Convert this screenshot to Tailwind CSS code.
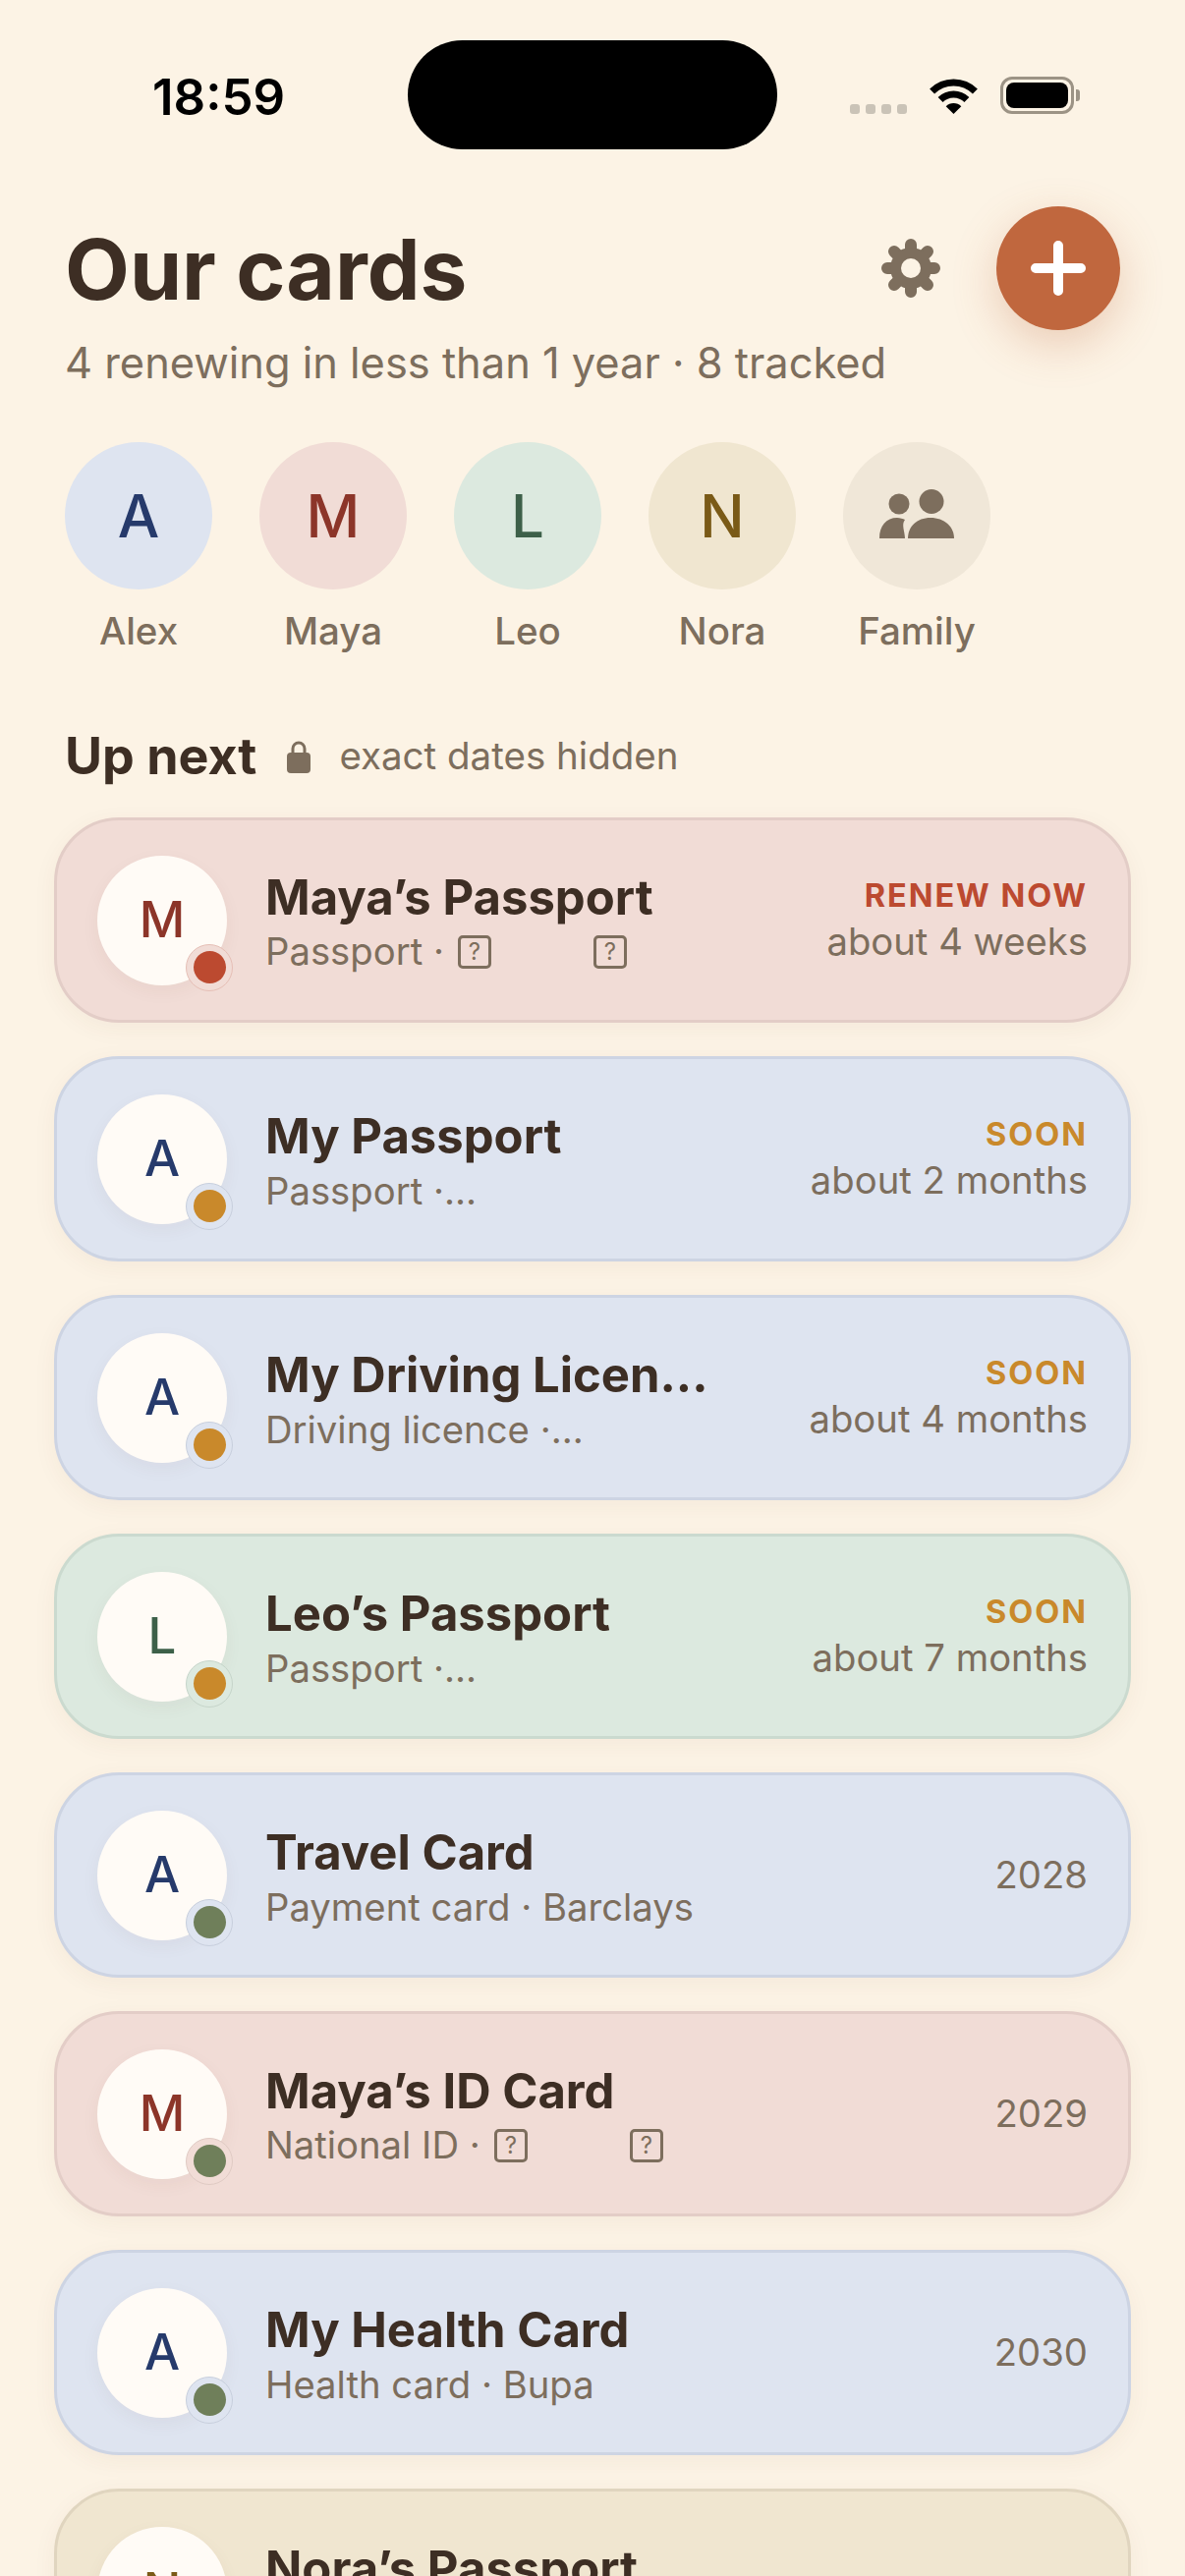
<!DOCTYPE html>
<html lang="en">
<head>
  <meta charset="UTF-8" />
  <meta name="viewport" content="width=device-width, initial-scale=1" />
  <title>Our cards</title>
  <script src="https://cdn.jsdelivr.net/npm/@tailwindcss/browser@4"></script>
</head>
<body class="bg-[#fcf3e5] font-['Inter',sans-serif] text-[#3d2e24] w-[1206px] h-[2622px] overflow-hidden">

  <!-- Status bar -->
  <div class="flex h-[152px] pt-[41px]">
    <div class="w-[415px] h-[111px] pl-[155px] pt-[21px] text-[51px] leading-[74px] font-semibold text-black">18:59</div>
    <div class="w-[376px] h-[111px] rounded-full bg-black"></div>
    <div class="flex items-end gap-[6px] ml-[74px] h-[75px] pb-0">
      <span class="w-[10px] h-[10px] rounded-[3px] bg-[#cac3b7]"></span>
      <span class="w-[10px] h-[10px] rounded-[3px] bg-[#cac3b7]"></span>
      <span class="w-[10px] h-[10px] rounded-[3px] bg-[#cac3b7]"></span>
      <span class="w-[10px] h-[10px] rounded-[3px] bg-[#cac3b7]"></span>
    </div>
    <svg class="ml-[22px] mt-[38px]" width="51" height="37" viewBox="0 0 51 37" fill="none">
      <path d="M3.6 14.1A31 31 0 0 1 47.4 14.1" stroke="#000" stroke-width="7"/>
      <path d="M12.1 22.6A19 19 0 0 1 38.9 22.6" stroke="#000" stroke-width="7"/>
      <path d="M25.5 37L17.7 29.2A11 11 0 0 1 33.3 29.2Z" fill="#000"/>
    </svg>
    <div class="flex items-center ml-[22px] mt-[37px] h-[38px]">
      <div class="w-[75px] h-[38px] rounded-[12px] border-[3px] border-[#9c9385] p-[3px]">
        <div class="w-full h-full rounded-[8px] bg-black"></div>
      </div>
      <div class="w-[4px] h-[12px] rounded-r-[3px] bg-[#9c9385] ml-[2px]"></div>
    </div>
  </div>

  <main>
    <!-- Header -->
    <div class="flex items-center pt-[58px] pl-[66px] pr-[66px]">
      <h1 class="flex-1 pt-[2px] text-[85.5px] leading-[124px] font-bold">Our cards</h1>
      <svg class="mr-[57px]" width="60" height="60" viewBox="0 0 60 60">
        <g stroke="#7d6e5d" stroke-width="12" stroke-linecap="round">
          <path d="M30 6V54M6 30H54M13 13L47 47M47 13L13 47"/>
        </g>
        <circle cx="30" cy="30" r="21" fill="#7d6e5d"/>
        <circle cx="30" cy="30" r="10" fill="#fcf3e5"/>
      </svg>
      <button class="w-[126px] h-[126px] rounded-full bg-[#c0673e] flex items-center justify-center shadow-[0_15px_45px_rgba(192,103,62,0.28)]">
        <svg width="56" height="56" viewBox="0 0 56 56"><path d="M28 5V51M5 28H51" stroke="#fff" stroke-width="10" stroke-linecap="round"/></svg>
      </button>
    </div>
    <p class="mt-[8px] pl-[66px] text-[43.4px] leading-[51px] text-[#7d6e5d]">4 renewing in less than 1 year · 8 tracked</p>

    <!-- People -->
    <div class="flex gap-[48px] mt-[55px] pl-[66px]">
      <div class="w-[150px] flex flex-col items-center">
        <div class="w-[150px] h-[150px] rounded-full bg-[#dee4f0] text-[#263a6b] flex items-center justify-center text-[60px] font-[550]">A</div>
        <span class="mt-[18px] text-[38.5px] leading-[48px] font-medium text-[#7d6e5d]">Alex</span>
      </div>
      <div class="w-[150px] flex flex-col items-center">
        <div class="w-[150px] h-[150px] rounded-full bg-[#f1dcd6] text-[#8c3529] flex items-center justify-center text-[60px] font-[550]">M</div>
        <span class="mt-[18px] text-[38.5px] leading-[48px] font-medium text-[#7d6e5d]">Maya</span>
      </div>
      <div class="w-[150px] flex flex-col items-center">
        <div class="w-[150px] h-[150px] rounded-full bg-[#dce9df] text-[#3d6049] flex items-center justify-center text-[60px] font-[550]">L</div>
        <span class="mt-[18px] text-[38.5px] leading-[48px] font-medium text-[#7d6e5d]">Leo</span>
      </div>
      <div class="w-[150px] flex flex-col items-center">
        <div class="w-[150px] h-[150px] rounded-full bg-[#f0e6d0] text-[#7a5a17] flex items-center justify-center text-[60px] font-[550]">N</div>
        <span class="mt-[18px] text-[38.5px] leading-[48px] font-medium text-[#7d6e5d]">Nora</span>
      </div>
      <div class="w-[150px] flex flex-col items-center">
        <div class="w-[150px] h-[150px] rounded-full bg-[#f0e7d8] flex items-center justify-center">
          <svg width="80" height="54" viewBox="0 0 80 54" fill="#7d6e5d">
            <circle cx="22" cy="15" r="10.5"/>
            <circle cx="55" cy="12.5" r="12.5"/>
            <path d="M2 50C2 37 9 29 20 29C23 29 26 30 28 31C24 36 28 43 28 50Z"/>
            <path d="M31 50C31 38 40 29 54 29C68 29 78 38 78 50Z"/>
          </svg>
        </div>
        <span class="mt-[18px] text-[38.5px] leading-[48px] font-medium text-[#7d6e5d]">Family</span>
      </div>
    </div>

    <!-- Up next -->
    <div class="flex items-center mt-[74px] pl-[66px] h-[60px]">
      <h2 class="text-[52px] font-bold">Up next</h2>
      <svg class="ml-[31px] mr-[29px]" width="24" height="33" viewBox="0 0 24 33" fill="#7d6e5d">
        <path d="M6 14V8a6 6 0 0 1 12 0v6" fill="none" stroke="#7d6e5d" stroke-width="3"/>
        <rect x="0" y="12" width="24" height="21" rx="4"/>
      </svg>
      <span class="text-[38.5px] text-[#7d6e5d]">exact dates hidden</span>
    </div>

    <!-- Cards -->
    <div class="flex flex-col gap-[34px] mt-[32px] ml-[55px] w-[1096px]">

      <div class="shrink-0 h-[209px] rounded-[66px] border-[3px] border-[#e3cdc7] bg-[#f1dcd6] shadow-[0_6px_24px_rgba(90,60,30,0.05)] pl-[41px] pr-[41px] flex items-center gap-[39px]">
        <div class="relative shrink-0 w-[132px] h-[132px] rounded-full bg-[#fffbf6] text-[#8c3529] flex items-center justify-center text-[51px] font-[550] shadow-[0_6px_18px_rgba(90,60,30,0.05)]">
          M
          <span class="absolute -right-[6px] -bottom-[6px] w-[48px] h-[48px] rounded-full bg-[#f1dcd6] border border-[#e6bfb6] flex items-center justify-center"><span class="w-[33px] h-[33px] rounded-full bg-[#bc4a30]"></span></span>
        </div>
        <div class="flex-1 min-w-0 pt-[5px]">
          <div class="text-[49px] leading-[60px] font-bold whitespace-nowrap">Maya’s Passport</div>
          <div class="flex items-center h-[50px] text-[38.25px] text-[#7d6e5d] whitespace-nowrap">
            Passport ·
            <span class="ml-[14px] w-[34px] h-[34px] rounded-[5px] border-[3px] border-[#7d6e5d] flex items-center justify-center text-[24px]">?</span>
            <span class="ml-[104px] w-[34px] h-[34px] rounded-[5px] border-[3px] border-[#7d6e5d] flex items-center justify-center text-[24px]">?</span>
          </div>
        </div>
        <div class="text-right whitespace-nowrap pb-[2px]">
          <div class="text-[32.5px] leading-[44px] font-bold tracking-[0.06em] text-[#bc4a30]">RENEW NOW</div>
          <div class="text-[38.25px] leading-[48px] text-[#7d6e5d]">about 4 weeks</div>
        </div>
      </div>

      <div class="shrink-0 h-[209px] rounded-[66px] border-[3px] border-[#cdd4e3] bg-[#dee4f0] shadow-[0_6px_24px_rgba(90,60,30,0.05)] pl-[41px] pr-[41px] flex items-center gap-[39px]">
        <div class="relative shrink-0 w-[132px] h-[132px] rounded-full bg-[#fffbf6] text-[#263a6b] flex items-center justify-center text-[51px] font-[550] shadow-[0_6px_18px_rgba(90,60,30,0.05)]">
          A
          <span class="absolute -right-[6px] -bottom-[6px] w-[48px] h-[48px] rounded-full bg-[#dee4f0] border border-[#c8cfdd] flex items-center justify-center"><span class="w-[33px] h-[33px] rounded-full bg-[#c9892b]"></span></span>
        </div>
        <div class="flex-1 min-w-0 pt-[5px]">
          <div class="text-[49px] leading-[60px] font-bold whitespace-nowrap">My Passport</div>
          <div class="h-[50px] leading-[50px] text-[38.25px] text-[#7d6e5d] whitespace-nowrap">Passport ·...</div>
        </div>
        <div class="text-right whitespace-nowrap pb-[2px]">
          <div class="text-[32.5px] leading-[44px] font-bold tracking-[0.06em] text-[#c9892b]">SOON</div>
          <div class="text-[38.25px] leading-[48px] text-[#7d6e5d]">about 2 months</div>
        </div>
      </div>

      <div class="shrink-0 h-[209px] rounded-[66px] border-[3px] border-[#cdd4e3] bg-[#dee4f0] shadow-[0_6px_24px_rgba(90,60,30,0.05)] pl-[41px] pr-[41px] flex items-center gap-[39px]">
        <div class="relative shrink-0 w-[132px] h-[132px] rounded-full bg-[#fffbf6] text-[#263a6b] flex items-center justify-center text-[51px] font-[550] shadow-[0_6px_18px_rgba(90,60,30,0.05)]">
          A
          <span class="absolute -right-[6px] -bottom-[6px] w-[48px] h-[48px] rounded-full bg-[#dee4f0] border border-[#c8cfdd] flex items-center justify-center"><span class="w-[33px] h-[33px] rounded-full bg-[#c9892b]"></span></span>
        </div>
        <div class="flex-1 min-w-0 pt-[5px]">
          <div class="text-[49px] leading-[60px] font-bold whitespace-nowrap">My Driving Licen...</div>
          <div class="h-[50px] leading-[50px] text-[38.25px] text-[#7d6e5d] whitespace-nowrap">Driving licence ·...</div>
        </div>
        <div class="text-right whitespace-nowrap pb-[2px]">
          <div class="text-[32.5px] leading-[44px] font-bold tracking-[0.06em] text-[#c9892b]">SOON</div>
          <div class="text-[38.25px] leading-[48px] text-[#7d6e5d]">about 4 months</div>
        </div>
      </div>

      <div class="shrink-0 h-[209px] rounded-[66px] border-[3px] border-[#cbdacf] bg-[#dce9df] shadow-[0_6px_24px_rgba(90,60,30,0.05)] pl-[41px] pr-[41px] flex items-center gap-[39px]">
        <div class="relative shrink-0 w-[132px] h-[132px] rounded-full bg-[#fffbf6] text-[#3d6049] flex items-center justify-center text-[51px] font-[550] shadow-[0_6px_18px_rgba(90,60,30,0.05)]">
          L
          <span class="absolute -right-[6px] -bottom-[6px] w-[48px] h-[48px] rounded-full bg-[#dce9df] border border-[#c6d5ca] flex items-center justify-center"><span class="w-[33px] h-[33px] rounded-full bg-[#c9892b]"></span></span>
        </div>
        <div class="flex-1 min-w-0 pt-[5px]">
          <div class="text-[49px] leading-[60px] font-bold whitespace-nowrap">Leo’s Passport</div>
          <div class="h-[50px] leading-[50px] text-[38.25px] text-[#7d6e5d] whitespace-nowrap">Passport ·...</div>
        </div>
        <div class="text-right whitespace-nowrap pb-[2px]">
          <div class="text-[32.5px] leading-[44px] font-bold tracking-[0.06em] text-[#c9892b]">SOON</div>
          <div class="text-[38.25px] leading-[48px] text-[#7d6e5d]">about 7 months</div>
        </div>
      </div>

      <div class="shrink-0 h-[209px] rounded-[66px] border-[3px] border-[#cdd4e3] bg-[#dee4f0] shadow-[0_6px_24px_rgba(90,60,30,0.05)] pl-[41px] pr-[41px] flex items-center gap-[39px]">
        <div class="relative shrink-0 w-[132px] h-[132px] rounded-full bg-[#fffbf6] text-[#263a6b] flex items-center justify-center text-[51px] font-[550] shadow-[0_6px_18px_rgba(90,60,30,0.05)]">
          A
          <span class="absolute -right-[6px] -bottom-[6px] w-[48px] h-[48px] rounded-full bg-[#dee4f0] border border-[#c8cfdd] flex items-center justify-center"><span class="w-[33px] h-[33px] rounded-full bg-[#6f7f5a]"></span></span>
        </div>
        <div class="flex-1 min-w-0 pt-[5px]">
          <div class="text-[49px] leading-[60px] font-bold whitespace-nowrap">Travel Card</div>
          <div class="h-[50px] leading-[50px] text-[38.25px] text-[#7d6e5d] whitespace-nowrap">Payment card · Barclays</div>
        </div>
        <div class="text-[38.25px] text-[#7d6e5d]">2028</div>
      </div>

      <div class="shrink-0 h-[209px] rounded-[66px] border-[3px] border-[#e3cdc7] bg-[#f1dcd6] shadow-[0_6px_24px_rgba(90,60,30,0.05)] pl-[41px] pr-[41px] flex items-center gap-[39px]">
        <div class="relative shrink-0 w-[132px] h-[132px] rounded-full bg-[#fffbf6] text-[#8c3529] flex items-center justify-center text-[51px] font-[550] shadow-[0_6px_18px_rgba(90,60,30,0.05)]">
          M
          <span class="absolute -right-[6px] -bottom-[6px] w-[48px] h-[48px] rounded-full bg-[#f1dcd6] border border-[#e0cbc4] flex items-center justify-center"><span class="w-[33px] h-[33px] rounded-full bg-[#6f7f5a]"></span></span>
        </div>
        <div class="flex-1 min-w-0 pt-[5px]">
          <div class="text-[49px] leading-[60px] font-bold whitespace-nowrap">Maya’s ID Card</div>
          <div class="flex items-center h-[50px] text-[38.25px] text-[#7d6e5d] whitespace-nowrap">
            National ID ·
            <span class="ml-[14px] w-[34px] h-[34px] rounded-[5px] border-[3px] border-[#7d6e5d] flex items-center justify-center text-[24px]">?</span>
            <span class="ml-[104px] w-[34px] h-[34px] rounded-[5px] border-[3px] border-[#7d6e5d] flex items-center justify-center text-[24px]">?</span>
          </div>
        </div>
        <div class="text-[38.25px] text-[#7d6e5d]">2029</div>
      </div>

      <div class="shrink-0 h-[209px] rounded-[66px] border-[3px] border-[#cdd4e3] bg-[#dee4f0] shadow-[0_6px_24px_rgba(90,60,30,0.05)] pl-[41px] pr-[41px] flex items-center gap-[39px]">
        <div class="relative shrink-0 w-[132px] h-[132px] rounded-full bg-[#fffbf6] text-[#263a6b] flex items-center justify-center text-[51px] font-[550] shadow-[0_6px_18px_rgba(90,60,30,0.05)]">
          A
          <span class="absolute -right-[6px] -bottom-[6px] w-[48px] h-[48px] rounded-full bg-[#dee4f0] border border-[#c8cfdd] flex items-center justify-center"><span class="w-[33px] h-[33px] rounded-full bg-[#6f7f5a]"></span></span>
        </div>
        <div class="flex-1 min-w-0 pt-[5px]">
          <div class="text-[49px] leading-[60px] font-bold whitespace-nowrap">My Health Card</div>
          <div class="h-[50px] leading-[50px] text-[38.25px] text-[#7d6e5d] whitespace-nowrap">Health card · Bupa</div>
        </div>
        <div class="text-[38.25px] text-[#7d6e5d]">2030</div>
      </div>

      <div class="shrink-0 h-[209px] rounded-[66px] border-[3px] border-[#e0d5bf] bg-[#f0e6d0] shadow-[0_6px_24px_rgba(90,60,30,0.05)] pl-[41px] pr-[41px] flex items-center gap-[39px]">
        <div class="relative shrink-0 w-[132px] h-[132px] rounded-full bg-[#fffbf6] text-[#7a5a17] flex items-center justify-center text-[51px] font-[550] shadow-[0_6px_18px_rgba(90,60,30,0.05)]">
          N
        </div>
        <div class="flex-1 min-w-0 pt-[5px]">
          <div class="text-[49px] leading-[60px] font-bold whitespace-nowrap">Nora’s Passport</div>
          <div class="h-[50px] leading-[50px] text-[38.25px] text-[#7d6e5d] whitespace-nowrap">Passport ·...</div>
        </div>
      </div>

    </div>
  </main>
</body>
</html>
